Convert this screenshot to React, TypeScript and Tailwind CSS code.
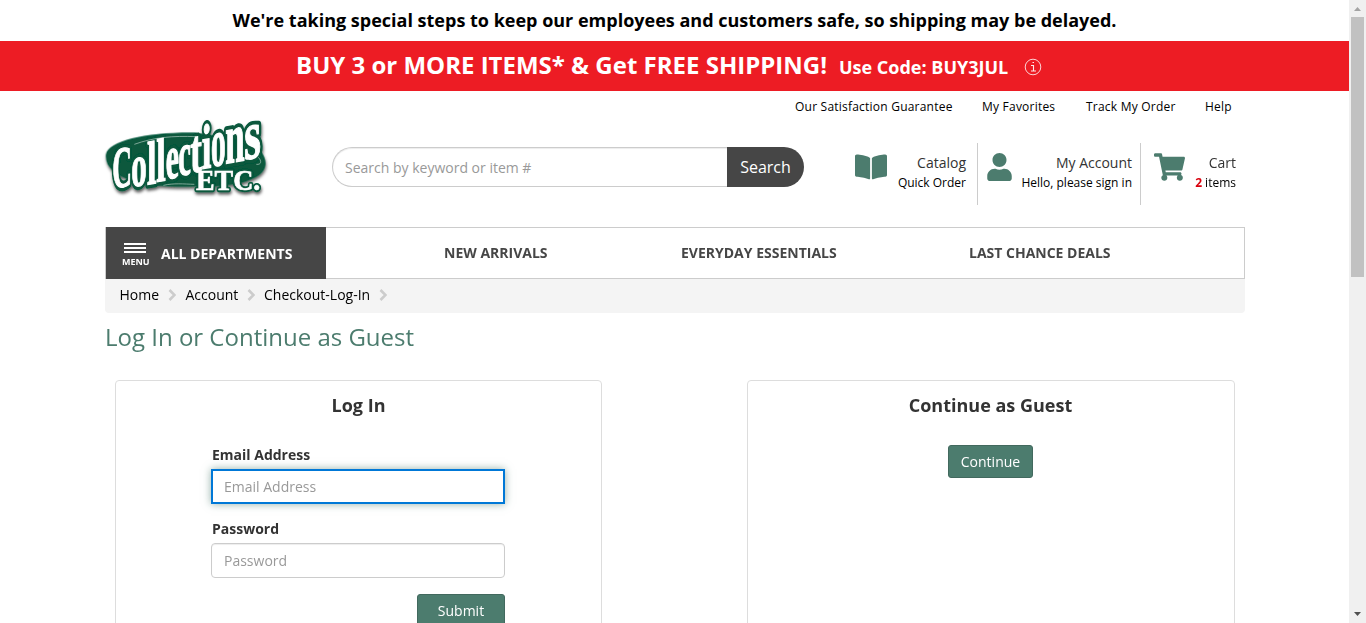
import { FaBookOpen, FaShoppingCart, FaUser } from "react-icons/fa";

const word = [
  { ch: "C", x: 52, y: 236, sx: 0.86, sy: 1.85 },
  { ch: "o", x: 109, y: 231, sx: 0.98, sy: 1.88 },
  { ch: "l", x: 156, y: 224, sx: 1.08, sy: 1.94 },
  { ch: "l", x: 184, y: 216, sx: 1.08, sy: 1.94 },
  { ch: "e", x: 212, y: 208, sx: 0.94, sy: 1.95 },
  { ch: "c", x: 250, y: 198, sx: 0.9, sy: 1.95 },
  { ch: "t", x: 286, y: 188, sx: 1.1, sy: 1.95 },
  { ch: "i", x: 320, y: 177, sx: 1.1, sy: 2.0 },
  { ch: "o", x: 348, y: 170, sx: 0.93, sy: 2.15 },
  { ch: "n", x: 391, y: 161, sx: 1.1, sy: 2.25 },
  { ch: "s", x: 448, y: 149, sx: 1.35, sy: 2.2 },
];

function Logo() {
  const glyphs = (
    <>
      {word.map((l, i) => (
        <text key={i} fontSize="100" transform={`matrix(${l.sx * 0.95} ${-0.17 * l.sx} 0 ${l.sy * 0.95} ${l.x} ${l.y})`}>{l.ch}</text>
      ))}
      <text fontSize="86" x="303" y="239" textLength="193" lengthAdjust="spacingAndGlyphs">ETC.</text>
    </>
  );
  return (
    <svg width="190" height="95" viewBox="0 0 570 285" className="-mt-[3px] -ml-[10px] block overflow-visible font-['Liberation_Serif',serif] font-bold">
      <defs>
        <filter id="shade" x="-10%" y="-10%" width="120%" height="125%">
          <feDropShadow dx="2" dy="7" stdDeviation="4" floodColor="#000" floodOpacity="0.65" />
        </filter>
      </defs>
      <g filter="url(#shade)">
        <path d="M33 133C40 91 160 66 300 68L450 90C498 108 517 145 510 170C500 212 410 234 300 229C190 235 25 215 33 133Z" fill="#07583c" />
        <g fill="#07583c" stroke="#07583c" strokeWidth="13" strokeLinejoin="round">{glyphs}</g>
      </g>
      <path d="M118 103C175 82 235 77 302 80M205 226C237 219 265 222 298 223M490 142C501 153 499 165 484 163" fill="none" stroke="#b7cec4" strokeWidth="2" />
      <g fill="#fff" stroke="#fff" strokeWidth="2">{glyphs}</g>
    </svg>
  );
}

function Crumb({ label, className }: { label: string; className: string }) {
  return (
    <span className={"flex items-center " + className}>
      {label}
      <svg width="8" height="12" viewBox="0 0 8 12" className="ml-[9px]"><path d="M1.5 1L6.5 6L1.5 11" fill="none" stroke="#ccc" strokeWidth="2.6" /></svg>
    </span>
  );
}

export default function App() {
  return (
    <div className="flex h-[623px] w-[1366px] overflow-hidden bg-white font-['Open_Sans',sans-serif] text-sm whitespace-nowrap text-[#333]">
      <main className="w-[1349px] shrink-0">
        <div className="flex h-[41px] items-center justify-center pb-0.5 text-lg font-bold text-black">
          We're taking special steps to keep our employees and customers safe, so shipping may be delayed.
        </div>
        <div className="flex h-[50px] items-center bg-[#ed1c24] pb-0.5 pl-[296px] font-bold text-white">
          <span className="w-[543px] text-2xl">BUY 3 or MORE ITEMS* &amp; Get FREE SHIPPING!</span>
          <span className="mt-1 w-[185px] text-lg">Use Code: BUY3JUL</span>
          <svg width="18" height="18" viewBox="0 0 18 18" className="mt-1" fill="none" stroke="#fff">
            <circle cx="9" cy="9" r="7.8" strokeWidth="1" opacity=".8" />
            <path d="M7 7.5H9.5V13M7 13H12M8.5 4.5H10" strokeWidth="1.1" opacity=".9" />
          </svg>
        </div>

        <header className="ml-[105px] w-[1140px]">
          <nav className="flex h-[32px] items-center pl-[690px] text-xs font-medium tracking-[0.22px] text-black">
            <a className="w-[187px]">Our Satisfaction Guarantee</a>
            <a className="w-[104px]">My Favorites</a>
            <a className="w-[119px]">Track My Order</a>
            <a>Help</a>
          </nav>
          <div className="flex h-[104px]">
            <div className="-mt-[10px] w-[227px] shrink-0"><Logo /></div>
            <div className="mt-6 flex h-10 w-[472px] shrink-0">
              <div className="flex w-[395px] items-center rounded-l-full border border-r-0 border-[#ccc] pt-0.5 pl-3 text-[#999] shadow-[inset_0_1px_1px_rgba(0,0,0,.075)]">Search by keyword or item #</div>
              <button className="w-[77px] rounded-r-full bg-[#464646] text-base text-white">Search</button>
            </div>
            <div className="mt-5 ml-[39px] flex h-[62px] w-[135px] justify-between border-r border-[#ccc] pr-[11px] pl-[12px]">
              <FaBookOpen className="mt-[6px] h-[36px] w-[32px] shrink-0 text-[#4c7c6e]" />
              <div className="pt-[10px] text-right"><p className="leading-5">Catalog</p><p className="text-xs leading-5 text-black">Quick Order</p></div>
            </div>
            <div className="mt-5 flex h-[62px] w-[163px] justify-between border-r border-[#ccc] pr-[8px] pl-[9px]">
              <FaUser className="mt-[10px] h-[28px] w-[25px] shrink-0 text-[#4c7c6e]" />
              <div className="pt-[10px] text-right"><p className="leading-5">My Account</p><p className="text-xs leading-5 text-black">Hello, please sign in</p></div>
            </div>
            <div className="mt-5 flex h-[62px] w-[104px] justify-between pr-[9px] pl-[13px]">
              <FaShoppingCart className="mt-[6px] h-[36px] w-[31px] shrink-0 text-[#4c7c6e]" />
              <div className="pt-[10px] text-right"><p className="leading-5">Cart</p><p className="text-xs leading-5 text-black"><b className="text-[#d9000d]">2</b> items</p></div>
            </div>
          </div>
          <nav className="flex h-[52px] items-center border border-[#ccc] font-bold text-[#464646]">
            <div className="-my-px flex h-[52px] w-[220px] shrink-0 items-center bg-[#464646] pt-[2px] pl-[15px] font-bold text-white">
              <div className="flex w-10 flex-col">
                <div className="mt-[2px] ml-[3px] flex w-[22px] flex-col gap-[2px]">
                  <i className="h-[2px] bg-white" /><i className="h-[2px] bg-white" /><i className="h-[2px] bg-white" />
                </div>
                <span className="mt-[3px] pl-px text-[9px] leading-3">MENU</span>
              </div>
              <span>ALL DEPARTMENTS</span>
            </div>
            <a className="ml-[118px] w-[237px]">NEW ARRIVALS</a>
            <a className="w-[288px]">EVERYDAY ESSENTIALS</a>
            <a>LAST CHANCE DEALS</a>
          </nav>
          <div className="flex h-[34px] items-center rounded-b bg-[#f4f4f4] pb-0.5 pl-[14.5px] text-black">
            <Crumb label="Home" className="w-[66px]" />
            <Crumb label="Account" className="w-[78.5px]" />
            <Crumb label="Checkout-Log-In" className="" />
          </div>
        </header>

        <section className="ml-[105px] w-[1140px]">
          <h1 className="mt-[8px] text-2xl leading-8 text-[#4c7c6e]">Log In or Continue as Guest</h1>
          <div className="mt-[27px] flex justify-between px-[10px]">
            <form className="h-[400px] w-[487px] rounded border border-[#ddd] px-[95px] pt-[12px]">
              <h2 className="text-center text-lg leading-6 font-bold">Log In</h2>
              <label className="mt-[28px] block pl-px leading-5 font-bold">Email Address</label>
              <div className="mt-[4px] flex h-[35px] w-[294px] items-center border-2 border-[#0078d7] pl-[11px] text-[#999] shadow-[0_0_8px_rgba(76,124,110,.6)]">Email Address</div>
              <label className="mt-[15px] block pl-px leading-5 font-bold">Password</label>
              <div className="mt-[4px] flex h-[35px] w-[294px] items-center rounded border border-[#ccc] pl-[12px] text-[#999] shadow-[inset_0_1px_1px_rgba(0,0,0,.075)]">Password</div>
              <button type="button" className="mt-4 ml-[206px] h-[34px] w-[88px] rounded-[3px] border border-[#42695e] bg-[#4c7c6e] text-white">Submit</button>
            </form>
            <div className="h-[400px] w-[488px] rounded border border-[#ddd] pt-[12px] pr-px text-center">
              <h2 className="text-lg leading-6 font-bold">Continue as Guest</h2>
              <button className="mt-[28px] h-[33px] w-[85px] rounded-[3px] border border-[#42695e] bg-[#4c7c6e] text-white">Continue</button>
            </div>
          </div>
        </section>
      </main>
      <aside className="flex w-[17px] shrink-0 flex-col items-center bg-[#f0f0f0]">
        <svg width="17" height="17" viewBox="0 0 17 17"><path d="M5 11L8.5 7L12 11Z" fill="#a3a3a3" /></svg>
        <div className="h-[260px] w-[13px] bg-[#c1c1c1]" />
        <svg width="17" height="17" viewBox="0 0 17 17" className="mt-auto"><path d="M5 6L8.5 10L12 6Z" fill="#505050" /></svg>
      </aside>
    </div>
  );
}
